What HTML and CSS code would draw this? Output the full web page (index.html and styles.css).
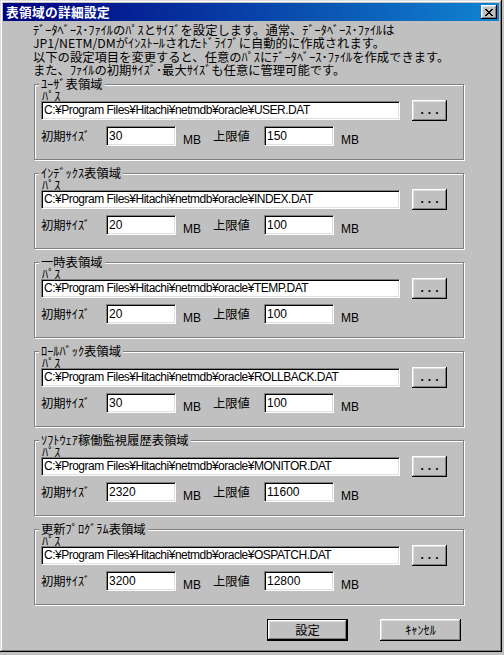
FILE: index.html
```html
<!DOCTYPE html>
<html lang="ja">
<head>
<meta charset="utf-8">
<title>表領域の詳細設定</title>
<link rel="stylesheet" href="styles.css">
</head>
<body>
<div class="window">
  <div class="titlebar">
    <span class="title">表領域の詳細設定</span>
    <span class="close">
      <svg width="8" height="7" viewBox="0 0 8 7" shape-rendering="crispEdges">
        <rect x="0" y="0" width="2" height="1"/><rect x="6" y="0" width="2" height="1"/>
        <rect x="1" y="1" width="2" height="1"/><rect x="5" y="1" width="2" height="1"/>
        <rect x="2" y="2" width="4" height="1"/>
        <rect x="3" y="3" width="2" height="1"/>
        <rect x="2" y="4" width="4" height="1"/>
        <rect x="1" y="5" width="2" height="1"/><rect x="5" y="5" width="2" height="1"/>
        <rect x="0" y="6" width="2" height="1"/><rect x="6" y="6" width="2" height="1"/>
      </svg>
    </span>
  </div>
  <div class="content">
    <p class="desc">ﾃﾞｰﾀﾍﾞｰｽ･ﾌｧｲﾙのﾊﾟｽとｻｲｽﾞを設定します。通常、ﾃﾞｰﾀﾍﾞｰｽ･ﾌｧｲﾙは<br>JP1/NETM/DMがｲﾝｽﾄｰﾙされたﾄﾞﾗｲﾌﾞに自動的に作成されます。<br>以下の設定項目を変更すると、任意のﾊﾟｽにﾃﾞｰﾀﾍﾞｰｽ･ﾌｧｲﾙを作成できます。<br>また、ﾌｧｲﾙの初期ｻｲｽﾞ･最大ｻｲｽﾞも任意に管理可能です。</p>

    <div class="group">
      <span class="group-title">ﾕｰｻﾞ表領域</span>
      <span class="lbl-path">ﾊﾟｽ</span>
      <div class="path-row">
        <input class="field path" type="text" value="C:¥Program Files¥Hitachi¥netmdb¥oracle¥USER.DAT">
        <button class="btn browse">...</button>
      </div>
      <div class="size-row">
        <span class="lbl-init">初期ｻｲｽﾞ</span>
        <input class="field num" type="text" value="30">
        <span class="mb">MB</span>
        <span class="lbl-max">上限値</span>
        <input class="field num" type="text" value="150">
        <span class="mb">MB</span>
      </div>
    </div>

    <div class="group">
      <span class="group-title">ｲﾝﾃﾞｯｸｽ表領域</span>
      <span class="lbl-path">ﾊﾟｽ</span>
      <div class="path-row">
        <input class="field path" type="text" value="C:¥Program Files¥Hitachi¥netmdb¥oracle¥INDEX.DAT">
        <button class="btn browse">...</button>
      </div>
      <div class="size-row">
        <span class="lbl-init">初期ｻｲｽﾞ</span>
        <input class="field num" type="text" value="20">
        <span class="mb">MB</span>
        <span class="lbl-max">上限値</span>
        <input class="field num" type="text" value="100">
        <span class="mb">MB</span>
      </div>
    </div>

    <div class="group">
      <span class="group-title">一時表領域</span>
      <span class="lbl-path">ﾊﾟｽ</span>
      <div class="path-row">
        <input class="field path" type="text" value="C:¥Program Files¥Hitachi¥netmdb¥oracle¥TEMP.DAT">
        <button class="btn browse">...</button>
      </div>
      <div class="size-row">
        <span class="lbl-init">初期ｻｲｽﾞ</span>
        <input class="field num" type="text" value="20">
        <span class="mb">MB</span>
        <span class="lbl-max">上限値</span>
        <input class="field num" type="text" value="100">
        <span class="mb">MB</span>
      </div>
    </div>

    <div class="group">
      <span class="group-title">ﾛｰﾙﾊﾞｯｸ表領域</span>
      <span class="lbl-path">ﾊﾟｽ</span>
      <div class="path-row">
        <input class="field path" type="text" value="C:¥Program Files¥Hitachi¥netmdb¥oracle¥ROLLBACK.DAT">
        <button class="btn browse">...</button>
      </div>
      <div class="size-row">
        <span class="lbl-init">初期ｻｲｽﾞ</span>
        <input class="field num" type="text" value="30">
        <span class="mb">MB</span>
        <span class="lbl-max">上限値</span>
        <input class="field num" type="text" value="100">
        <span class="mb">MB</span>
      </div>
    </div>

    <div class="group">
      <span class="group-title">ｿﾌﾄｳｪｱ稼働監視履歴表領域</span>
      <span class="lbl-path">ﾊﾟｽ</span>
      <div class="path-row">
        <input class="field path" type="text" value="C:¥Program Files¥Hitachi¥netmdb¥oracle¥MONITOR.DAT">
        <button class="btn browse">...</button>
      </div>
      <div class="size-row">
        <span class="lbl-init">初期ｻｲｽﾞ</span>
        <input class="field num" type="text" value="2320">
        <span class="mb">MB</span>
        <span class="lbl-max">上限値</span>
        <input class="field num" type="text" value="11600">
        <span class="mb">MB</span>
      </div>
    </div>

    <div class="group">
      <span class="group-title">更新ﾌﾟﾛｸﾞﾗﾑ表領域</span>
      <span class="lbl-path">ﾊﾟｽ</span>
      <div class="path-row">
        <input class="field path" type="text" value="C:¥Program Files¥Hitachi¥netmdb¥oracle¥OSPATCH.DAT">
        <button class="btn browse">...</button>
      </div>
      <div class="size-row">
        <span class="lbl-init">初期ｻｲｽﾞ</span>
        <input class="field num" type="text" value="3200">
        <span class="mb">MB</span>
        <span class="lbl-max">上限値</span>
        <input class="field num" type="text" value="12800">
        <span class="mb">MB</span>
      </div>
    </div>

    <div class="footer">
      <button class="btn action default">設定</button>
      <button class="btn action">ｷｬﾝｾﾙ</button>
    </div>
  </div>
</div>
</body>
</html>
```

FILE: styles.css
```css
html, body {
  margin: 0;
  padding: 0;
  background: #c0c0c0;
}

body {
  font-family: "Noto Sans CJK JP", "Liberation Sans", sans-serif;
  font-size: 12.3px;
  color: #000;
}

.window {
  width: 502px;
  height: 652px;
  box-sizing: border-box;
  padding: 3px;
  background: #c0c0c0;
  box-shadow: inset -1px -1px #000, inset 1px 1px #dfdfdf, inset -2px -2px #808080, inset 2px 2px #fff;
}

.titlebar {
  height: 18px;
  display: flex;
  align-items: center;
  justify-content: space-between;
  padding: 0 2px 0 3px;
  background: linear-gradient(to right, #000080, #1084d0);
  color: #fff;
}

.title {
  font-weight: bold;
  font-size: 12.7px;
  line-height: 18px;
  letter-spacing: 0.3px;
}

.close {
  width: 16px;
  height: 14px;
  display: flex;
  align-items: center;
  justify-content: center;
  background: #c0c0c0;
  box-shadow: inset -1px -1px #000, inset 1px 1px #fff, inset -2px -2px #808080, inset 2px 2px #dfdfdf;
}

.close svg {
  display: block;
  fill: #000;
  margin-left: -1px;
}

.content {
  padding: 0 35px 0 31px;
}

.desc {
  margin: 3px 0 0 -1px;
  line-height: 13.4px;
  white-space: nowrap;
}

.group {
  display: flex;
  flex-direction: column;
  align-items: flex-start;
  height: 76px;
  box-sizing: border-box;
  margin-top: 13px;
  padding: 0 0 0 6px;
  border: 1px solid #808080;
  box-shadow: inset 1px 1px #fff, 1px 1px #fff;
}

.desc + .group {
  margin-top: 6px;
}

.group-title {
  margin: -7px 0 0 -2px;
  padding: 0 2px;
  height: 12px;
  line-height: 12px;
  background: #c0c0c0;
  white-space: nowrap;
}

.lbl-path {
  line-height: 11px;
  height: 11px;
  margin-top: 1px;
  margin-left: 1px;
}

.path-row {
  display: flex;
  align-items: center;
  margin-top: -1px;
}

.field {
  box-sizing: border-box;
  margin: 0;
  padding: 0 2px;
  font-family: "Liberation Sans", "Noto Sans CJK JP", sans-serif;
  font-size: 12px;
  color: #000;
  background: #fff;
  border-style: solid;
  border-width: 1px;
  border-color: #808080 #fff #fff #808080;
  box-shadow: inset 1px 1px #000, inset -1px -1px #dfdfdf;
  outline: none;
}

.field.path {
  width: 359px;
  height: 19px;
  letter-spacing: -0.5px;
}

.btn {
  box-sizing: border-box;
  margin: 0;
  padding: 0;
  border: none;
  background: #c0c0c0;
  color: #000;
  font-family: "Noto Sans CJK JP", "Liberation Sans", sans-serif;
  font-size: 12.3px;
  box-shadow: inset -1px -1px #000, inset 1px 1px #fff, inset -2px -2px #808080, inset 2px 2px #dfdfdf;
}

.btn.browse {
  width: 35px;
  height: 21px;
  margin: -1px 0 -1px 12px;
  font-family: "Liberation Sans", sans-serif;
  font-weight: bold;
  font-size: 12px;
  letter-spacing: 4px;
  padding-left: 4px;
  line-height: 15px;
}

.size-row {
  display: flex;
  align-items: center;
  height: 20px;
  margin-top: 6px;
}

.lbl-init {
  width: 65px;
  white-space: nowrap;
}

.field.num {
  width: 70px;
  height: 20px;
}

.mb {
  width: 30px;
  margin-left: 7px;
  align-self: flex-end;
  font-family: "Liberation Sans", sans-serif;
  font-size: 12px;
  line-height: 14px;
  margin-bottom: -1px;
}

.lbl-max {
  width: 51px;
  white-space: nowrap;
}

.footer {
  display: flex;
  justify-content: flex-end;
  gap: 32px;
  margin-top: 14px;
  padding-right: 3px;
}

.btn.action {
  width: 81px;
  height: 22px;
  line-height: 20px;
}

.btn.default {
  box-shadow: inset 0 0 0 1px #000, inset -2px -2px #000, inset 2px 2px #fff, inset -3px -3px #808080, inset 3px 3px #dfdfdf;
}
```
